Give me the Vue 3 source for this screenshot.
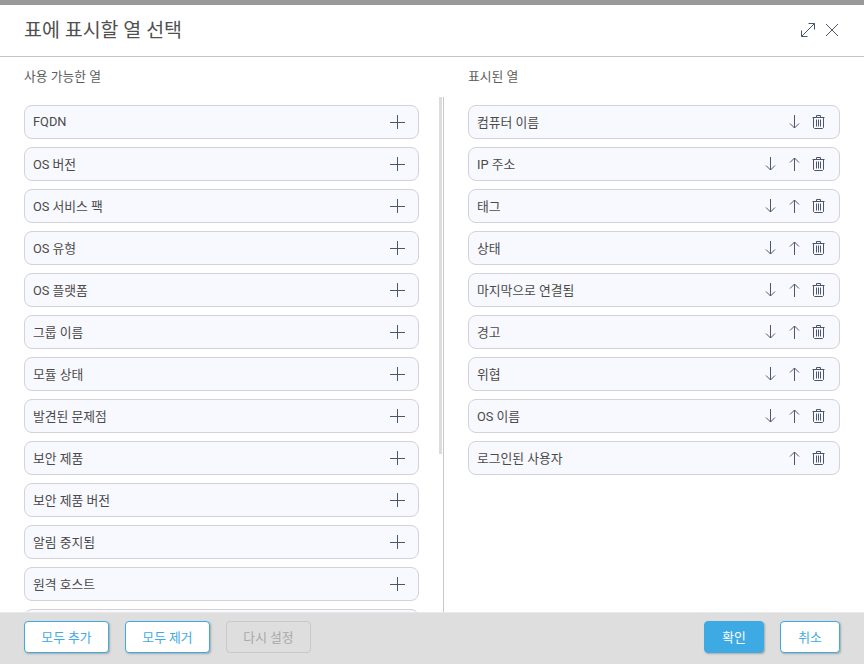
<template>
  <div class="dialog">
    <div class="top-strip"></div>
    <header class="head">
      <h1>표에 표시할 열 선택</h1>
      <div class="head-icons">
        <svg width="16" height="16" viewBox="0 0 16 16" class="icon">
          <path d="M1.500 14.500 14.500 1.500M8.500 1.500h6v6M1.500 8.500v6h6" />
        </svg>
        <svg width="14" height="14" viewBox="0 0 14 14" class="icon">
          <path d="M1 1 13 13M13 1 1 13" />
        </svg>
      </div>
    </header>

    <main class="body">
      <section class="col col-left">
        <h2>사용 가능한 열</h2>
        <div class="list-wrap">
          <div class="list">
            <div v-for="(name, i) in available" :key="i" class="row">
              <span>{{ name }}</span>
              <svg width="15" height="14" viewBox="0 0 15 14" class="icon">
                <path d="M7.500 0v14M0 7.500h15" />
              </svg>
            </div>
          </div>
          <div class="thumb"></div>
        </div>
      </section>

      <section class="col col-right">
        <h2>표시된 열</h2>
        <div class="list">
          <div v-for="(name, i) in shown" :key="name" class="row">
            <span>{{ name }}</span>
            <div class="row-icons">
              <svg v-if="i < shown.length - 1" width="12" height="14" viewBox="0 0 12 14" class="icon">
                <path d="M5.500 0v13M1 8.500 5.500 13 10 8.500" />
              </svg>
              <svg v-if="i > 0" width="12" height="14" viewBox="0 0 12 14" class="icon">
                <path d="M5.500 14V1M1 5.500 5.500 1 10 5.500" />
              </svg>
              <svg width="13" height="14" viewBox="0 0 13 14" class="icon trash">
                <path d="M.5 2.500h12M4.500 2.500V.5h4v2M1.500 2.500v10l1 1h8l1-1v-10M4.500 4.500v7M6.500 4.500v7M8.500 4.500v7" />
              </svg>
            </div>
          </div>
        </div>
      </section>
    </main>

    <footer class="foot">
      <button class="btn">모두 추가</button>
      <button class="btn">모두 제거</button>
      <button class="btn disabled" disabled>다시 설정</button>
      <button class="btn primary push">확인</button>
      <button class="btn narrow">취소</button>
    </footer>
  </div>
</template>

<script setup>
// the last row is only peeking out above the footer, its label can't be seen
const available = [
  "FQDN",
  "OS 버전",
  "OS 서비스 팩",
  "OS 유형",
  "OS 플랫폼",
  "그룹 이름",
  "모듈 상태",
  "발견된 문제점",
  "보안 제품",
  "보안 제품 버전",
  "알림 중지됨",
  "원격 호스트",
  "",
];

const shown = [
  "컴퓨터 이름",
  "IP 주소",
  "태그",
  "상태",
  "마지막으로 연결됨",
  "경고",
  "위협",
  "OS 이름",
  "로그인된 사용자",
];
</script>

<style>
html,
body {
  margin: 0;
  height: 100%;
  overflow: hidden;
}
</style>

<style scoped>
.dialog {
  height: 664px;
  display: flex;
  flex-direction: column;
  background: #fff;
  font-family: Roboto, "Noto Sans CJK KR", sans-serif;
  color: #4a4a4a;
  overflow: hidden;
}

.top-strip {
  height: 5px;
  background: #999;
  flex: none;
}

.head {
  height: 52px;
  flex: none;
  box-sizing: border-box;
  border-bottom: 1px solid #c4c4c4;
  padding: 0 25px 2px 24px;
  display: flex;
  align-items: center;
  justify-content: space-between;
}

.head h1 {
  margin: 0 0 2px;
  font-size: 19.500px;
  font-weight: 400;
  color: #505050;
}

.head-icons {
  display: flex;
  align-items: center;
  gap: 9px;
}

.icon {
  fill: none;
  stroke: #4c5669;
  stroke-width: 1;
  flex: none;
  display: block;
}

.body {
  flex: 1;
  min-height: 0;
  display: flex;
}

.col h2 {
  margin: 0;
  height: 40px;
  line-height: 40px;
  font-size: 12.800px;
  font-weight: 400;
  color: #5c5c5c;
}

.col-left {
  width: 443px;
  box-sizing: border-box;
  padding-left: 24px;
  display: flex;
  flex-direction: column;
  min-height: 0;
}

.col-right {
  flex: 1;
  padding: 0 24px;
  border-left: 1px solid #c8c8c8;
  margin-top: 40px;
}

.col-right h2 {
  margin-top: -40px;
}

.list-wrap {
  flex: 1;
  min-height: 0;
  position: relative;
  overflow: hidden;
  padding-right: 24px;
}

.list {
  display: flex;
  flex-direction: column;
  gap: 8px;
  padding-top: 8px;
}

.thumb {
  position: absolute;
  top: 0;
  right: 1px;
  width: 3px;
  height: 357px;
  background: #dcdcdc;
}

.row {
  height: 34px;
  flex: none;
  box-sizing: border-box;
  border: 1px solid #d2d2d8;
  border-radius: 8px;
  background: #f8f9fe;
  padding: 0 13px 0 8px;
  display: flex;
  align-items: center;
  justify-content: space-between;
  font-size: 12.800px;
  color: #4a4a4a;
}

.row span {
  padding-bottom: 2px;
}

.row-icons {
  display: flex;
  align-items: center;
  gap: 12px;
  margin-right: 2px;
}

.trash {
  margin: 0 -1px 0 -1px;
}

.foot {
  height: 52px;
  flex: none;
  box-sizing: border-box;
  background: #dedede;
  border-top: 1px solid #e8e8e8;
  padding: 8px 24px 0;
  display: flex;
  align-items: flex-start;
  gap: 16px;
}

.btn {
  width: 85px;
  height: 32px;
  box-sizing: border-box;
  border: 1px solid #3daae3;
  border-radius: 4px;
  background: #fff;
  color: #3daae3;
  font-family: inherit;
  font-size: 12.800px;
  padding: 0 0 2px;
  box-shadow: 1px 1px 2px rgba(0, 0, 0, 0.25);
}

.btn.disabled {
  background: #dedede;
  border-color: #c8c8c8;
  color: #a8a8a8;
  box-shadow: none;
}

.btn.primary {
  background: #3daae3;
  color: #fff;
  width: 60px;
}

.btn.narrow {
  width: 60px;
}

.push {
  margin-left: auto;
}
</style>
